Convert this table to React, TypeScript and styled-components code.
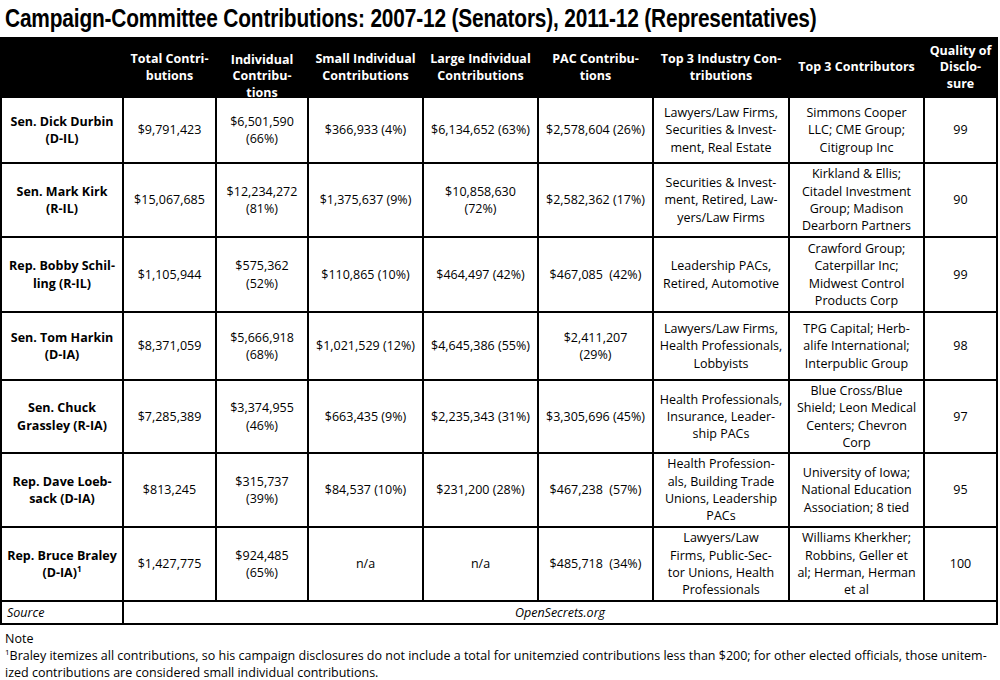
import React from "react";
import styled, { createGlobalStyle } from "styled-components";

const Global = createGlobalStyle`
  html, body { margin: 0; padding: 0; background: #fff; }
  body { font-family: "Open Sans", "Liberation Sans", sans-serif; color: #000; }
`;

const Page = styled.div`
  width: 1000px;
  height: 680px;
  overflow: hidden;
  background: #fff;
`;

const Title = styled.h1`
  margin: 0;
  height: 37px;
  padding-left: 5px;
  font-family: "Liberation Sans", sans-serif;
  font-weight: 700;
  font-size: 25px;
  line-height: 37px;
  color: #000;
  white-space: nowrap;
  overflow: visible;
`;

const TitleText = styled.span`
  display: inline-block;
  transform: scaleX(0.835);
  transform-origin: 0 50%;
  letter-spacing: -0.2px;
`;

const Grid = styled.div`
  display: grid;
  width: 998px;
  box-sizing: border-box;
  grid-template-columns: 120px 91px 90px 113px 113px 113px 134px 133px 71px;
  grid-template-rows: 57px 64px 72px 73px 66px 71px 72px 72px 21px;
  gap: 2px;
  padding: 2px;
  background: #000;
`;

const HeadCell = styled.div<{ $top?: number }>`
  background: #000;
  color: #fff;
  font-weight: 700;
  font-size: 12.5px;
  line-height: 16.5px;
  display: flex;
  align-items: center;
  justify-content: center;
  text-align: center;
  white-space: pre-line;
  padding-top: ${(p) => p.$top ?? 0}px;
  box-sizing: border-box;
`;

const Cell = styled.div<{ $bold?: boolean }>`
  background: #fff;
  color: #000;
  font-size: 12.5px;
  line-height: 17.3px;
  font-weight: ${(p) => (p.$bold ? 700 : 400)};
  display: flex;
  align-items: center;
  justify-content: center;
  text-align: center;
  white-space: pre-line;
`;

const SourceLabel = styled.div`
  background: #fff;
  font-style: italic;
  font-size: 12.5px;
  display: flex;
  align-items: center;
  padding-left: 5px;
`;

const SourceValue = styled.div`
  background: #fff;
  font-style: italic;
  font-size: 12.5px;
  display: flex;
  align-items: center;
  justify-content: center;
  grid-column: 2 / span 8;
`;

const Sup = styled.sup`
  font-size: 8px;
  line-height: 0;
  vertical-align: 5px;
`;

const Notes = styled.div`
  padding: 5px 0 0 5px;
  font-size: 12.5px;
  line-height: 17px;
  color: #000;
  white-space: nowrap;
`;

const headers: { text: string; top?: number }[] = [
  { text: "" },
  { text: "Total Contri-\nbutions" },
  { text: "Individual\nContribu-\ntions", top: 18 },
  { text: "Small Individual\nContributions" },
  { text: "Large Individual\nContributions" },
  { text: "PAC Contribu-\ntions" },
  { text: "Top 3 Industry Con-\ntributions" },
  { text: "Top 3 Contributors" },
  { text: "Quality of\nDisclo-\nsure" },
];

const NB = "\u00a0";

const rows: string[][] = [
  [
    "Sen. Dick Durbin\n(D-IL)",
    "$9,791,423",
    "$6,501,590\n(66%)",
    "$366,933 (4%)",
    "$6,134,652 (63%)",
    "$2,578,604 (26%)",
    "Lawyers/Law Firms,\nSecurities & Invest-\nment, Real Estate",
    "Simmons Cooper\nLLC; CME Group;\nCitigroup Inc",
    "99",
  ],
  [
    "Sen. Mark Kirk\n(R-IL)",
    "$15,067,685",
    "$12,234,272\n(81%)",
    "$1,375,637 (9%)",
    "$10,858,630\n(72%)",
    "$2,582,362 (17%)",
    "Securities & Invest-\nment, Retired, Law-\nyers/Law Firms",
    "Kirkland & Ellis;\nCitadel Investment\nGroup; Madison\nDearborn Partners",
    "90",
  ],
  [
    "Rep. Bobby Schil-\nling (R-IL)",
    "$1,105,944",
    "$575,362\n(52%)",
    "$110,865 (10%)",
    "$464,497 (42%)",
    `$467,085${NB} (42%)`,
    "Leadership PACs,\nRetired, Automotive",
    "Crawford Group;\nCaterpillar Inc;\nMidwest Control\nProducts Corp",
    "99",
  ],
  [
    "Sen. Tom Harkin\n(D-IA)",
    "$8,371,059",
    "$5,666,918\n(68%)",
    "$1,021,529 (12%)",
    "$4,645,386 (55%)",
    "$2,411,207\n(29%)",
    "Lawyers/Law Firms,\nHealth Professionals,\nLobbyists",
    "TPG Capital; Herb-\nalife International;\nInterpublic Group",
    "98",
  ],
  [
    "Sen. Chuck\nGrassley (R-IA)",
    "$7,285,389",
    "$3,374,955\n(46%)",
    "$663,435 (9%)",
    "$2,235,343 (31%)",
    "$3,305,696 (45%)",
    "Health Professionals,\nInsurance, Leader-\nship PACs",
    "Blue Cross/Blue\nShield; Leon Medical\nCenters; Chevron\nCorp",
    "97",
  ],
  [
    "Rep. Dave Loeb-\nsack (D-IA)",
    "$813,245",
    "$315,737\n(39%)",
    "$84,537 (10%)",
    "$231,200 (28%)",
    `$467,238${NB} (57%)`,
    "Health Profession-\nals, Building Trade\nUnions, Leadership\nPACs",
    "University of Iowa;\nNational Education\nAssociation; 8 tied",
    "95",
  ],
  [
    "BRALEY",
    "$1,427,775",
    "$924,485\n(65%)",
    "n/a",
    "n/a",
    `$485,718${NB} (34%)`,
    "Lawyers/Law\nFirms, Public-Sec-\ntor Unions, Health\nProfessionals",
    "Williams Kherkher;\nRobbins, Geller et\nal; Herman, Herman\net al",
    "100",
  ],
];

export default function App() {
  return (
    <Page>
      <Global />
      <Title>
        <TitleText>
          Campaign-Committee Contributions: 2007-12 (Senators), 2011-12 (Representatives)
        </TitleText>
      </Title>
      <Grid>
        {headers.map((h, i) => (
          <HeadCell key={`h${i}`} $top={h.top}>
            {h.text}
          </HeadCell>
        ))}
        {rows.map((r, ri) =>
          r.map((c, ci) => (
            <Cell key={`${ri}-${ci}`} $bold={ci === 0}>
              {c === "BRALEY" ? (
                <span>
                  Rep. Bruce Braley
                  {"\n"}(D-IA)<Sup>1</Sup>
                </span>
              ) : (
                c
              )}
            </Cell>
          ))
        )}
        <SourceLabel>Source</SourceLabel>
        <SourceValue>OpenSecrets.org</SourceValue>
      </Grid>
      <Notes>
        Note
        <br />
        <Sup>1</Sup>Braley itemizes all contributions, so his campaign disclosures do not include a total for unitemzied contributions less than $200; for other elected officials, those unitem-
        <br />
        ized contributions are considered small individual contributions.
      </Notes>
    </Page>
  );
}
